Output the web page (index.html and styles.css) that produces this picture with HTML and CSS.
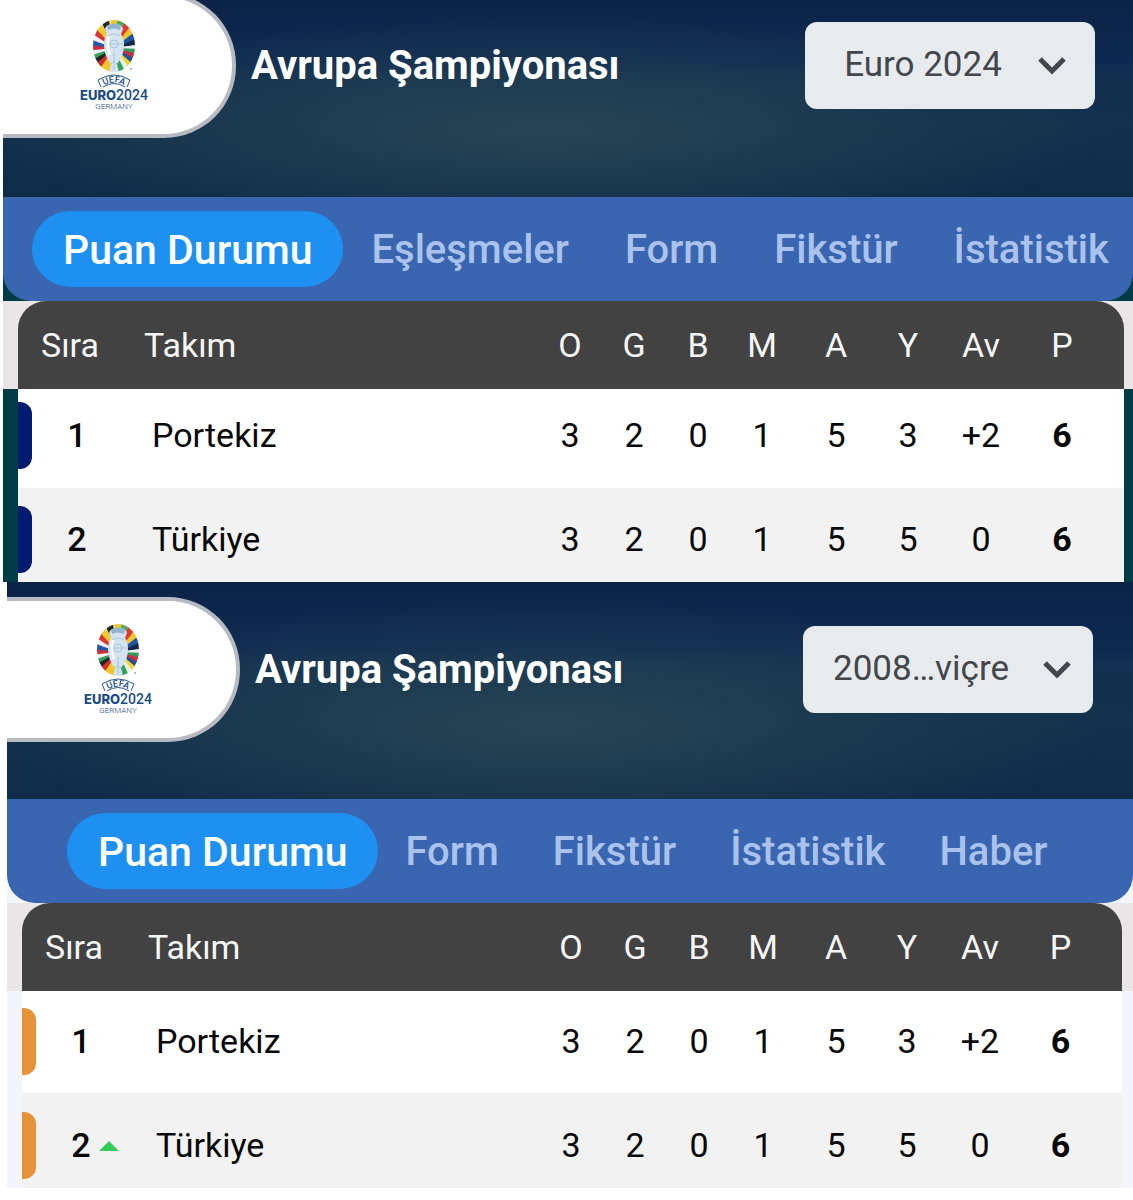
FILE: index.html
```html
<!DOCTYPE html>
<html lang="tr">
<head>
<meta charset="utf-8">
<meta name="viewport" content="width=device-width, initial-scale=1">
<title>Avrupa Şampiyonası</title>
<link rel="stylesheet" href="styles.css">
</head>
<body>
<svg class="sprite" width="0" height="0" aria-hidden="true">
  <defs>
    <clipPath id="oval"><ellipse cx="38" cy="26" rx="21" ry="26"/></clipPath>
    <path id="ray" d="M0 0L40 -5.600V5.600Z"/>
    <path id="arc" d="M21 71Q38 54 55 71"/>
    <symbol id="logo" viewBox="0 0 76 92">
      <g clip-path="url(#oval)">
        <g transform="translate(38 28)">
          <use href="#ray" transform="rotate(-90)" fill="#e9c62b"/>
          <use href="#ray" transform="rotate(-75)" fill="#4fa862"/>
          <use href="#ray" transform="rotate(-60)" fill="#dd3a30"/>
          <use href="#ray" transform="rotate(-45)" fill="#f5c52c"/>
          <use href="#ray" transform="rotate(-30)" fill="#1c55a5"/>
          <use href="#ray" transform="rotate(-15)" fill="#15264a"/>
          <use href="#ray" fill="#e8f0f4"/>
          <use href="#ray" transform="rotate(10)" fill="#2f9b57"/>
          <use href="#ray" transform="rotate(22)" fill="#c82f42"/>
          <use href="#ray" transform="rotate(35)" fill="#234f9d"/>
          <use href="#ray" transform="rotate(48)" fill="#f4d22c"/>
          <use href="#ray" transform="rotate(60)" fill="#e8f0e8"/>
          <use href="#ray" transform="rotate(73)" fill="#32a05a"/>
          <use href="#ray" transform="rotate(105)" fill="#f1c52b"/>
          <use href="#ray" transform="rotate(120)" fill="#f1c52b"/>
          <use href="#ray" transform="rotate(132)" fill="#d32d2f"/>
          <use href="#ray" transform="rotate(146)" fill="#22251f"/>
          <use href="#ray" transform="rotate(159)" fill="#38a05d"/>
          <use href="#ray" transform="rotate(170)" fill="#f0f3f5"/>
          <use href="#ray" transform="rotate(182)" fill="#cc3040"/>
          <use href="#ray" transform="rotate(195)" fill="#2458a8"/>
          <use href="#ray" transform="rotate(208)" fill="#eef2f6"/>
          <use href="#ray" transform="rotate(221)" fill="#dc3433"/>
          <use href="#ray" transform="rotate(235)" fill="#f3ca2c"/>
          <use href="#ray" transform="rotate(252)" fill="#26281f"/>
        </g>
        <path d="M33 52L35 44Q28 36 28 25Q28 18 31 14L29 9Q30 4 38 4T47 9L45 14Q48 18 48 25Q48 36 41 44L43 52Z" fill="#d3e3f0"/>
        <path d="M31 6Q38 1 45 6L44 10Q38 7 32 10Z" fill="#92b3cf"/>
        <path d="M32 16Q38 12 44 16M29 24H47M34 24A4 4 0 0 1 42 24A4 4 0 0 1 34 24M35 44Q38 40 41 44M38 33V50" fill="none" stroke="#a7c3dc" stroke-width="1"/>
        <path d="M33 16Q30 25 34 35" fill="none" stroke="#f6fafc" stroke-width="3"/>
      </g>
      <circle cx="55" cy="49" r="0.700" fill="#345"/>
      <path d="M22 60Q38 50 54 60M27 67Q38 60 49 67M22 60L25 67M54 60L51 67" fill="none" stroke="#2a588f" stroke-width="1"/>
      <text class="logo-text logo-uefa" text-anchor="middle"><textPath href="#arc" startOffset="50%">UEFA</textPath></text>
      <text class="logo-text logo-euro" x="38" y="80" text-anchor="middle"><tspan class="logo-heavy">EURO</tspan>2024</text>
      <text class="logo-text logo-host" x="38" y="89" text-anchor="middle">GERMANY</text>
    </symbol>
  </defs>
</svg>

<main>
  <section class="panel panel-2024">
    <header class="hero">
      <div class="badge"><svg class="logo" role="img" aria-label="UEFA Euro 2024 Germany"><use href="#logo"/></svg></div>
      <h2 class="title">Avrupa Şampiyonası</h2>
      <div class="season">
        <select aria-label="Sezon"><option>Euro 2024</option></select>
        <svg class="chevron" viewBox="0 0 28 18" aria-hidden="true"><path d="M2 2L14 14L26 2"/></svg>
      </div>
    </header>
    <nav class="tabs">
      <a href="#" class="active" aria-current="page">Puan Durumu</a>
      <a href="#">Eşleşmeler</a>
      <a href="#">Form</a>
      <a href="#">Fikstür</a>
      <a href="#">İstatistik</a>
    </nav>
    <div class="standings">
      <table>
        <colgroup><col class="c-rank"><col><col class="c-num"><col class="c-num"><col class="c-num"><col class="c-num"><col class="c-for"><col class="c-against"><col class="c-diff"><col class="c-points"></colgroup>
        <thead>
          <tr><th class="rank">Sıra</th><th class="team">Takım</th><th>O</th><th>G</th><th>B</th><th>M</th><th>A</th><th>Y</th><th>Av</th><th class="points">P</th></tr>
        </thead>
        <tbody>
          <tr><td><div class="place"><i class="marker"></i><span>1</span></div></td><td class="team">Portekiz</td><td>3</td><td>2</td><td>0</td><td>1</td><td>5</td><td>3</td><td>+2</td><td class="points">6</td></tr>
          <tr><td><div class="place"><i class="marker"></i><span>2</span></div></td><td class="team">Türkiye</td><td>3</td><td>2</td><td>0</td><td>1</td><td>5</td><td>5</td><td>0</td><td class="points">6</td></tr>
        </tbody>
      </table>
    </div>
  </section>

  <section class="panel panel-2008">
    <header class="hero">
      <div class="badge"><svg class="logo" role="img" aria-label="UEFA Euro 2024 Germany"><use href="#logo"/></svg></div>
      <h2 class="title">Avrupa Şampiyonası</h2>
      <div class="season">
        <select aria-label="Sezon"><option>2008…viçre</option></select>
        <svg class="chevron" viewBox="0 0 28 18" aria-hidden="true"><path d="M2 2L14 14L26 2"/></svg>
      </div>
    </header>
    <nav class="tabs">
      <a href="#" class="active" aria-current="page">Puan Durumu</a>
      <a href="#">Form</a>
      <a href="#">Fikstür</a>
      <a href="#">İstatistik</a>
      <a href="#">Haber</a>
    </nav>
    <div class="standings">
      <table>
        <colgroup><col class="c-rank"><col><col class="c-num"><col class="c-num"><col class="c-num"><col class="c-num"><col class="c-for"><col class="c-against"><col class="c-diff"><col class="c-points"></colgroup>
        <thead>
          <tr><th class="rank">Sıra</th><th class="team">Takım</th><th>O</th><th>G</th><th>B</th><th>M</th><th>A</th><th>Y</th><th>Av</th><th class="points">P</th></tr>
        </thead>
        <tbody>
          <tr><td><div class="place"><i class="marker"></i><span>1</span></div></td><td class="team">Portekiz</td><td>3</td><td>2</td><td>0</td><td>1</td><td>5</td><td>3</td><td>+2</td><td class="points">6</td></tr>
          <tr><td><div class="place"><i class="marker"></i><span>2<svg class="rise" viewBox="0 0 20 10" role="img" aria-label="Yükseldi"><path d="M0 10L10 0L20 10Z"/></svg></span></div></td><td class="team">Türkiye</td><td>3</td><td>2</td><td>0</td><td>1</td><td>5</td><td>5</td><td>0</td><td class="points">6</td></tr>
        </tbody>
      </table>
    </div>
  </section>
</main>
</body>
</html>
```
FILE: styles.css
```css
* { box-sizing: border-box; }

body {
  margin: 0;
  background: #fff;
  color: #080808;
  font-family: Roboto, "Liberation Sans", sans-serif;
}

.sprite { position: absolute; }

.panel {
  overflow: hidden;
  background: var(--side);
}

.panel-2024 {
  --side: #003c46;
  --marker: #001c70;
  --row-1: 99px;
  --row-2: 94px;
  --pad-1: 13px;
  --pad-2: 18px;
  --tab-pad: 28px;
  --for: 84px;
  --points: 100px;
  margin-left: 3px;
}

.panel-2008 {
  --side: #f4f5fa;
  --marker: #e69338;
  --row-1: 102px;
  --row-2: 95px;
  --pad-1: 17px;
  --pad-2: 19px;
  --tab-pad: 27px;
  --for: 82px;
  --points: 99px;
  margin-left: 7px;
}

/* Stadium banner */
.hero {
  display: flex;
  align-items: flex-start;
  overflow: hidden;
  background:
    radial-gradient(ellipse 50% 60% at 48% 66%, rgba(44, 73, 86, .8), rgba(38, 68, 84, .5) 50%, transparent),
    linear-gradient(#0b2346, #0e2a52 32%, #12304f 38%, #12314c 65%, #0e2b48);
}

.panel-2024 .hero { height: 197px; padding-right: 38px; }
.panel-2008 .hero { height: 217px; padding: 15px 40px 0 0; }
.panel-2024 .hero > * { margin-top: -7px; }

.badge {
  display: flex;
  flex: 0 0 233px;
  align-items: center;
  height: 145px;
  padding-left: 73px;
  background: #fff;
  border: solid #b8bac2;
  border-width: 4px 4px 4px 0;
  border-radius: 0 72px 72px 0;
}

.logo { width: 76px; height: 92px; }
.logo-text { fill: #1a4c86; }
.logo-uefa { font: 500 9px Roboto, sans-serif; }
.logo-euro { font: 500 14px Roboto, sans-serif; }
.logo-heavy { font: 800 13px Inter, sans-serif; }
.logo-host { font: 300 8px Roboto, sans-serif; }

.title {
  flex: 1;
  margin: 0;
  padding-left: 15px;
  color: #fff;
  font-size: 40px;
  font-weight: 700;
  line-height: 145px;
  white-space: nowrap;
}

.season {
  position: relative;
  display: flex;
  align-items: center;
  height: 145px;
}

.season select {
  width: 290px;
  height: 87px;
  padding: 0 54px 2px 0;
  appearance: none;
  background: #e8ebee;
  border: 0;
  border-radius: 12px;
  color: #43464b;
  font: 400 35px Roboto, "Liberation Sans", sans-serif;
  text-align: center;
  text-align-last: center;
}

.chevron {
  position: absolute;
  right: 29px;
  width: 28px;
  height: 18px;
  fill: none;
  stroke: #43464b;
  stroke-width: 5;
  pointer-events: none;
}

.panel-2008 .chevron { right: 22px; }

/* Section tabs */
.tabs {
  display: flex;
  align-items: center;
  height: 104px;
  overflow: hidden;
  background: #3a66b1;
  border-radius: 0 0 28px 28px;
}

.panel-2024 .tabs { padding-left: 29px; }
.panel-2008 .tabs { padding-left: 60px; }

.tabs a {
  flex: none;
  padding: 2px var(--tab-pad) 0;
  color: #abc3ec;
  font-size: 40px;
  font-weight: 500;
  line-height: 74px;
  text-decoration: none;
  white-space: nowrap;
}

.tabs .active {
  padding: 2px 31px 0;
  background: #1d90f2;
  border-radius: 38px;
  color: #fff;
  font-size: 41px;
}

/* League table */
.standings {
  padding: 0 9px 0 15px;
  background: linear-gradient(#e8e6e7 88px, var(--side) 88px);
}

.panel-2008 .standings { padding-right: 11px; }

table {
  width: 100%;
  table-layout: fixed;
  border-collapse: separate;
  border-spacing: 0;
  font-size: 34px;
}

.c-rank { width: 118px; }
.c-num { width: 64px; }
.c-for { width: var(--for); }
.c-against { width: 60px; }
.c-diff { width: 86px; }
.c-points { width: var(--points); }

th {
  height: 88px;
  padding: 0;
  background: #424242;
  color: #f6f6f6;
  font-weight: 400;
}

th:first-child { border-top-left-radius: 28px; }
th:last-child { border-top-right-radius: 28px; }
th.rank { padding-left: 23px; text-align: left; }
th.team { padding-left: 8px; text-align: left; }

td {
  height: var(--row-1);
  padding: var(--pad-1) 0 0;
  background: #fff;
  line-height: 67px;
  text-align: center;
  vertical-align: top;
}

tr:nth-child(2) td {
  height: var(--row-2);
  padding-top: var(--pad-2);
  background: #f2f2f2;
}

td.team { padding-left: 16px; text-align: left; }
tr:nth-child(n) .points { padding-right: 24px; }
td.points { font-weight: 700; }

.place {
  display: grid;
  grid-template-columns: 14px 1fr 14px;
  justify-items: center;
  font-weight: 500;
}

.place span { position: relative; }

.marker {
  width: 14px;
  height: 67px;
  background: var(--marker);
  border-radius: 0 12px 12px 0;
}

.rise {
  position: absolute;
  top: 29px;
  left: 28px;
  width: 20px;
  height: 10px;
  fill: #35cb5b;
}
```
